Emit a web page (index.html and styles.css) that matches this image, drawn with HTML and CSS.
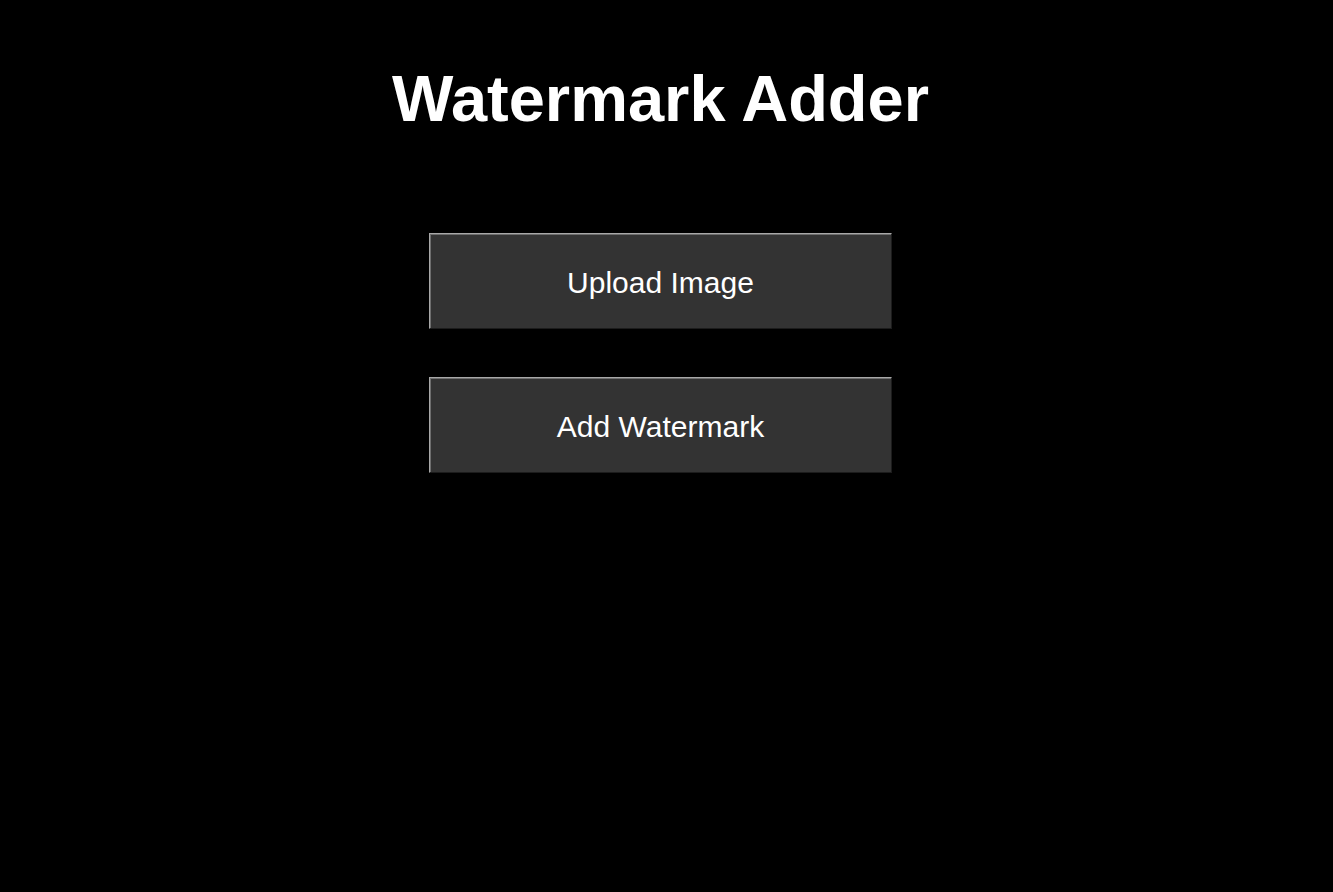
FILE: index.html
```html
<!DOCTYPE html>
<html lang="en">
<head>
<meta charset="utf-8">
<title>Watermark Adder</title>
<link rel="stylesheet" href="styles.css">
</head>
<body>
<main class="app">
  <h1 class="title">Watermark Adder</h1>
  <div class="actions">
    <button class="btn" type="button">Upload Image</button>
    <button class="btn" type="button">Add Watermark</button>
  </div>
</main>
</body>
</html>
```

FILE: styles.css
```css
html, body {
  margin: 0;
  padding: 0;
  background: #000;
  height: 100%;
}
body {
  font-family: "Liberation Sans", Arial, sans-serif;
  color: #fff;
}
.app {
  width: 1321px;
  display: flex;
  flex-direction: column;
  align-items: center;
}
.title {
  margin: 63px 0 0;
  font-size: 65px;
  font-weight: bold;
  line-height: 72px;
}
.actions {
  margin-top: 98px;
  display: flex;
  flex-direction: column;
  gap: 48px;
}
.btn {
  width: 463px;
  height: 96px;
  box-sizing: border-box;
  background: #333;
  color: #fff;
  font-family: "Liberation Sans", Arial, sans-serif;
  font-size: 30px;
  border-style: solid;
  border-width: 1px;
  border-color: #a8a8a8 #1c1c1c #1c1c1c #a8a8a8;
  box-shadow: inset 1px 1px 0 #6e6e6e;
  padding: 3px 0 0;
  cursor: pointer;
}
```
